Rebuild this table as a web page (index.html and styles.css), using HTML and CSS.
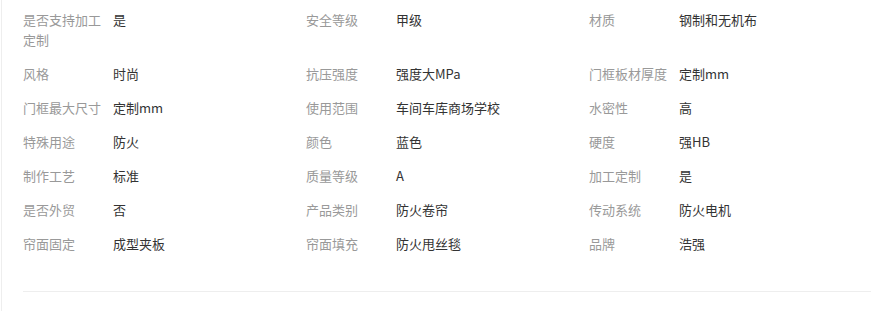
FILE: index.html
```html
<!DOCTYPE html>
<html lang="zh">
<head>
<meta charset="utf-8">
<link rel="stylesheet" href="styles.css">
</head>
<body>
<div class="panel">
  <div class="attrs">
    <div class="item"><span class="k">是否支持加工定制</span><span class="v">是</span></div>
    <div class="item"><span class="k">安全等级</span><span class="v">甲级</span></div>
    <div class="item"><span class="k">材质</span><span class="v">钢制和无机布</span></div>
    <div class="item"><span class="k">风格</span><span class="v">时尚</span></div>
    <div class="item"><span class="k">抗压强度</span><span class="v">强度大MPa</span></div>
    <div class="item"><span class="k">门框板材厚度</span><span class="v">定制mm</span></div>
    <div class="item"><span class="k">门框最大尺寸</span><span class="v">定制mm</span></div>
    <div class="item"><span class="k">使用范围</span><span class="v">车间车库商场学校</span></div>
    <div class="item"><span class="k">水密性</span><span class="v">高</span></div>
    <div class="item"><span class="k">特殊用途</span><span class="v">防火</span></div>
    <div class="item"><span class="k">颜色</span><span class="v">蓝色</span></div>
    <div class="item"><span class="k">硬度</span><span class="v">强HB</span></div>
    <div class="item"><span class="k">制作工艺</span><span class="v">标准</span></div>
    <div class="item"><span class="k">质量等级</span><span class="v">A</span></div>
    <div class="item"><span class="k">加工定制</span><span class="v">是</span></div>
    <div class="item"><span class="k">是否外贸</span><span class="v">否</span></div>
    <div class="item"><span class="k">产品类别</span><span class="v">防火卷帘</span></div>
    <div class="item"><span class="k">传动系统</span><span class="v">防火电机</span></div>
    <div class="item"><span class="k">帘面固定</span><span class="v">成型夹板</span></div>
    <div class="item"><span class="k">帘面填充</span><span class="v">防火甩丝毯</span></div>
    <div class="item"><span class="k">品牌</span><span class="v">浩强</span></div>
  </div>
  <div class="divider"></div>
</div>
</body>
</html>
```

FILE: styles.css
```css
html, body {
  margin: 0;
  padding: 0;
  background: #fff;
}
body {
  font-family: "Microsoft YaHei", "Noto Sans CJK SC", "Noto Sans", sans-serif;
  font-size: 13px;
}
.panel {
  margin-left: 1px;
  border-left: 1px solid #eeeeee;
  height: 311px;
  box-sizing: border-box;
  padding: 3px 6px 0 21px;
}
.attrs {
  display: grid;
  grid-template-columns: repeat(3, 283px);
}
.item {
  display: flex;
  padding: 7px 0;
  line-height: 20px;
}
.k {
  width: 80px;
  margin-right: 10px;
  flex-shrink: 0;
  color: #999999;
}
.v {
  color: #333333;
}
.divider {
  margin-top: 30px;
  height: 1px;
  background: #eeeeee;
  width: 848px;
}
```
